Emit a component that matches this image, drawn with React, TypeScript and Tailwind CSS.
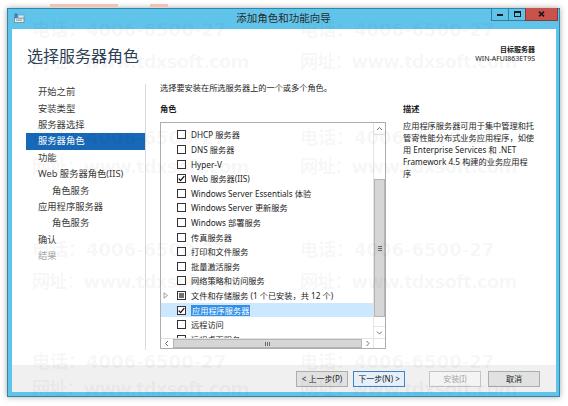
import React from 'react';

type Role = { label: string; state?: 'on' | 'mixed'; sel?: boolean; expand?: boolean };

const roles: Role[] = [
  { label: 'DHCP 服务器' },
  { label: 'DNS 服务器' },
  { label: 'Hyper-V' },
  { label: 'Web 服务器(IIS)', state: 'on' },
  { label: 'Windows Server Essentials 体验' },
  { label: 'Windows Server 更新服务' },
  { label: 'Windows 部署服务' },
  { label: '传真服务器' },
  { label: '打印和文件服务' },
  { label: '批量激活服务' },
  { label: '网络策略和访问服务' },
  { label: '文件和存储服务 (1 个已安装，共 12 个)', state: 'mixed', expand: true },
  { label: '应用程序服务器', state: 'on', sel: true },
  { label: '远程访问' },
  { label: '远程桌面服务' },
];

const navItems: { label: string; sel?: boolean; sub?: boolean; dim?: boolean }[] = [
  { label: '开始之前' },
  { label: '安装类型' },
  { label: '服务器选择' },
  { label: '服务器角色', sel: true },
  { label: '功能' },
  { label: 'Web 服务器角色(IIS)' },
  { label: '角色服务', sub: true },
  { label: '应用程序服务器' },
  { label: '角色服务', sub: true },
  { label: '确认' },
  { label: '结果', dim: true },
];

function CheckBox({ state }: { state?: 'on' | 'mixed' }) {
  return (
    <span className="flex h-[9px] w-[9px] shrink-0 items-center justify-center border border-[#333333] bg-white">
      {state === 'on' && (
        <svg width="7" height="7" viewBox="0 0 7 7">
          <path d="M0.7 3.6 L2.6 5.6 L6.3 1.1" fill="none" stroke="#111" strokeWidth="1.3" />
        </svg>
      )}
      {state === 'mixed' && <span className="h-[5px] w-[5px] bg-[#707070]" />}
    </span>
  );
}

function Chevron({ dir }: { dir: 'up' | 'down' | 'left' | 'right' }) {
  const d = {
    up: 'M1 4 L3.5 1.5 L6 4',
    down: 'M1 1.5 L3.5 4 L6 1.5',
    left: 'M4 1 L1.5 3.5 L4 6',
    right: 'M1.5 1 L4 3.5 L1.5 6',
  }[dir];
  const horizontal = dir === 'up' || dir === 'down';
  return (
    <svg width={horizontal ? 7 : 6} height={horizontal ? 6 : 7} viewBox={horizontal ? '0 0 7 6' : '0 0 6 7'}>
      <path d={d} fill="none" stroke="#606060" strokeWidth="0.9" />
    </svg>
  );
}

function RoleList() {
  return (
    <div className="flex h-[227px] w-[226px] flex-col border border-[#abadb3] bg-white">
      <div className="flex h-[215px]">
        {/* rows */}
        <div className="flex-1 overflow-hidden pt-[4.7px]">
          {roles.map((r, i) => (
            <div
              key={i}
              className={`flex h-[14.6px] items-center ${r.sel ? 'bg-[#cce8ff]' : ''}`}
            >
              <span className="flex w-[16px] shrink-0 pl-[2px]">
                {r.expand && (
                  <svg width="6" height="7" viewBox="0 0 6 7">
                    <path d="M1 0.8 L4.6 3.5 L1 6.2 Z" fill="none" stroke="#8a8a8a" strokeWidth="0.8" />
                  </svg>
                )}
              </span>
              <CheckBox state={r.state} />
              <span
                className={`ml-[5px] whitespace-nowrap text-[8.2px] leading-[11px] ${
                  r.sel ? 'bg-[#3390e6] px-[1px] text-white' : 'text-[#1c1c1c]'
                }`}
              >
                {r.label}
              </span>
            </div>
          ))}
        </div>
        {/* vertical scrollbar */}
        <div className="flex w-[12px] flex-col border-l border-[#e3e3e3] bg-white">
          <div className="flex h-[12px] items-center justify-center border-b border-[#e3e3e3]">
            <Chevron dir="up" />
          </div>
          <div className="h-[44px]" />
          <div className="flex h-[138px] items-center justify-center border border-[#b4b4b4] bg-[#d6d6d6]">
            <div className="flex flex-col gap-[1px]">
              <span className="h-[1px] w-[4px] bg-[#6a6a6a]" />
              <span className="h-[1px] w-[4px] bg-[#6a6a6a]" />
              <span className="h-[1px] w-[4px] bg-[#6a6a6a]" />
            </div>
          </div>
          <div className="h-[9px]" />
          <div className="flex h-[12px] items-center justify-center border-t border-[#e3e3e3]">
            <Chevron dir="down" />
          </div>
        </div>
      </div>
      {/* horizontal scrollbar */}
      <div className="flex h-[10px] border-t border-[#e3e3e3]">
        <div className="flex w-[12px] items-center justify-center">
          <Chevron dir="left" />
        </div>
        <div className="flex w-[189px] items-center justify-center border border-[#b4b4b4] bg-[#d6d6d6]">
          <div className="flex gap-[1px]">
            <span className="h-[4px] w-[1px] bg-[#6a6a6a]" />
            <span className="h-[4px] w-[1px] bg-[#6a6a6a]" />
            <span className="h-[4px] w-[1px] bg-[#6a6a6a]" />
          </div>
        </div>
        <div className="flex flex-1 items-center justify-center">
          <Chevron dir="right" />
        </div>
        <div className="w-[12px] border-l border-[#e3e3e3] bg-white" />
      </div>
    </div>
  );
}

function TitleBar() {
  return (
    <div className="relative flex h-[20px] items-start">
      {/* app icon */}
      <div className="ml-[6px] mt-[4px]">
        <svg width="11" height="10" viewBox="0 0 11 10">
          <rect x="0.5" y="0.5" width="3" height="5" fill="#2f7fc1" />
          <rect x="0.5" y="5" width="9.5" height="4.5" fill="#e9eef2" stroke="#6f8796" strokeWidth="0.8" />
          <rect x="2" y="6.6" width="6" height="1" fill="#7a8f9c" />
          <rect x="4" y="2" width="6" height="3" fill="#dfe8ee" stroke="#6f8796" strokeWidth="0.6" />
        </svg>
      </div>
      <div className="absolute inset-x-0 top-0 flex h-[20px] items-center justify-center text-[10.5px] text-[#2a2a2a]">
        添加角色和功能向导
      </div>
      <div className="relative ml-auto mr-[1px] -mt-[1px] flex h-[13px]">
        <div className="flex w-[17px] items-center justify-center border-b border-l border-[#3a7c98]">
          <span className="mt-[2px] h-[2px] w-[6px] bg-[#1a1a1a]" />
        </div>
        <div className="flex w-[17px] items-center justify-center border-b border-l border-[#3a7c98]">
          <span className="h-[6px] w-[7px] border border-t-2 border-[#1a1a1a]" />
        </div>
        <div className="flex w-[33px] items-center justify-center border-b border-l border-r border-[#8a3a36] bg-[#c8524c]">
          <svg width="7" height="6" viewBox="0 0 7 6">
            <path d="M1 0.6 L6 5.4 M6 0.6 L1 5.4" stroke="#1a1a1a" strokeWidth="1.6" />
          </svg>
        </div>
      </div>
    </div>
  );
}

function WizardButton({
  children,
  variant = 'normal',
  className = '',
}: {
  children: React.ReactNode;
  variant?: 'normal' | 'focus' | 'disabled';
  className?: string;
}) {
  const look =
    variant === 'focus'
      ? 'border-[#3c86c8] bg-[#e6f0fa] text-[#1a1a1a]'
      : variant === 'disabled'
      ? 'border-[#c4c4c4] bg-[#f4f4f4] text-[#a6a6a6]'
      : 'border-[#adadad] bg-[#e1e1e1] text-[#1a1a1a]';
  return (
    <div
      className={`flex h-[16px] w-[52px] items-center justify-center border text-[8px] ${look} ${className}`}
    >
      {children}
    </div>
  );
}

const watermarkRows: { top: number; text: string; web?: boolean }[] = [
  { top: 20, text: '电话：4006-6500-27' },
  { top: 52, text: '网址：www.tdxsoft.com', web: true },
  { top: 128, text: '电话：4006-6500-27' },
  { top: 157, text: '网址：www.tdxsoft.com', web: true },
  { top: 240, text: '电话：4006-6500-27' },
  { top: 272, text: '网址：www.tdxsoft.com', web: true },
  { top: 352, text: '电话：4006-6500-27' },
  { top: 379, text: '网址：www.tdxsoft.com', web: true },
];

export default function App() {
  return (
    <div className="relative h-[406px] w-[568px] overflow-hidden bg-white font-['Noto_Sans','Noto_Sans_CJK_SC',sans-serif]">
      {/* strip of desktop behind the window */}
      <div className="flex h-[8px] items-end pb-[1px]">
        <span className="ml-[50px] h-[3px] w-[68px] bg-[#f2c3b2]" />
        <span className="ml-[32px] h-[3px] w-[18px] bg-[#f2c3b2]" />
      </div>

      {/* wizard window */}
      <div className="ml-[7px] flex h-[389px] w-[553px] flex-col border border-[#2f86ad] bg-[#60c4ea] shadow-[0_0_6px_rgba(0,0,0,0.35)]">
        <TitleBar />
        <div className="mb-[4px] ml-[4px] mr-[3px] flex flex-1 flex-col bg-white">
          {/* header */}
          <div className="flex h-[51px] items-start justify-between">
            <h1 className="ml-[15px] mt-[17px] text-[16px] leading-[20px] text-[#2d4157]">选择服务器角色</h1>
            <div className="mr-[21px] mt-[16px] text-right text-[7px] leading-[9px] text-[#1a1a1a]">
              <div className="font-bold">目标服务器</div>
              <div>WIN-AFUI863ET9S</div>
            </div>
          </div>

          {/* body */}
          <div className="flex flex-1">
            <nav className="mb-[15px] mt-[4px] w-[134px] border-r border-[#dadada]">
              {navItems.map((n, i) => (
                <div
                  key={i}
                  className={`ml-[14px] flex h-[16.4px] items-center whitespace-nowrap text-[9.3px] ${
                    n.sub ? 'pl-[26px]' : 'pl-[12px]'
                  } ${
                    n.sel
                      ? 'bg-[#1769b8] text-white'
                      : n.dim
                      ? 'text-[#a8a8a8]'
                      : 'text-[#3a3a3a]'
                  }`}
                >
                  {n.label}
                </div>
              ))}
            </nav>

            <div className="flex-1 pl-[14px] pt-[2px]">
              <div className="h-[12px] text-[8.2px] leading-[12px] text-[#1c1c1c]">
                选择要安装在所选服务器上的一个或多个角色。
              </div>
              <div className="mt-[9px] flex">
                <div className="w-[226px]">
                  <div className="h-[12px] text-[8.2px] font-bold leading-[12px] text-[#1c1c1c]">角色</div>
                  <div className="mt-[7px]">
                    <RoleList />
                  </div>
                </div>
                <div className="ml-[17px] w-[140px]">
                  <div className="h-[12px] text-[8.2px] font-bold leading-[12px] text-[#1c1c1c]">描述</div>
                  <div className="mt-[5px] text-[8.2px] leading-[12px] text-[#1c1c1c]">
                    <div>应用程序服务器可用于集中管理和托</div>
                    <div>管寄性能分布式业务应用程序，如使</div>
                    <div>用 Enterprise Services 和 .NET</div>
                    <div>Framework 4.5 构建的业务应用程</div>
                    <div>序</div>
                  </div>
                </div>
              </div>
            </div>
          </div>

          {/* footer */}
          <div className="flex h-[27px] items-center justify-end bg-[#f0f0f0] pr-[16px]">
            <WizardButton>&lt; 上一步(P)</WizardButton>
            <WizardButton variant="focus" className="ml-[5px]">
              下一步(N) &gt;
            </WizardButton>
            <WizardButton variant="disabled" className="ml-[24px]">
              安装(I)
            </WizardButton>
            <WizardButton className="ml-[7px]">取消</WizardButton>
          </div>
        </div>
      </div>

      {/* faint watermark printed over the whole screen */}
      <div className="pointer-events-none absolute inset-0 font-['DejaVu_Sans','Noto_Sans_CJK_SC',sans-serif] text-[18px] font-bold leading-[20px] text-black/[0.05]">
        {watermarkRows.map((w, i) => (
          <div
            key={i}
            className={`absolute left-0 flex whitespace-nowrap ${w.web ? 'tracking-[-0.8px]' : ''}`}
            style={{ top: w.top }}
          >
            <span className="ml-[32px] w-[268px]">{w.text}</span>
            <span>{w.text}</span>
          </div>
        ))}
      </div>
    </div>
  );
}
